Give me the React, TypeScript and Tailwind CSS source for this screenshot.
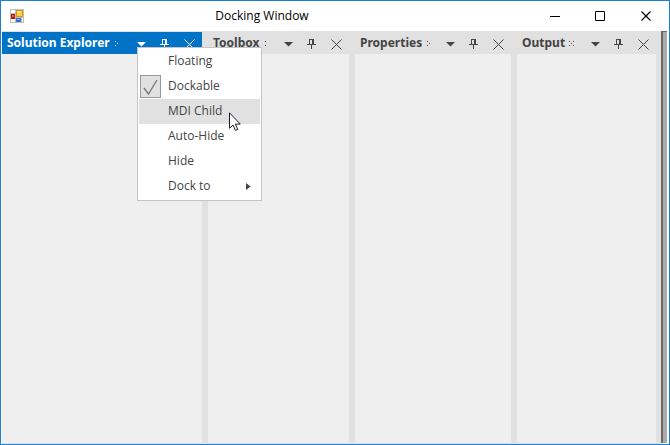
import type { ReactNode } from "react";

type Panel = {
  title: string;
  active?: boolean;
  // pixels of the dotted grip that follows the title
  grip: string;
};

const panels: Panel[] = [
  { title: "Solution Explorer", active: true, grip: "M1 0h1v1h-1zM3 2h1v1h-1zM1 4h1v1h-1z" },
  { title: "Toolbox", grip: "M2 0h1v1h-1zM2 4h1v1h-1z" },
  { title: "Properties", grip: "M1 0h1v1h-1zM3 2h1v1h-1zM1 4h1v1h-1z" },
  { title: "Output", grip: "M0 0h1v1h-1zM4 0h1v1h-1zM2 2h1v1h-1zM0 4h1v1h-1zM4 4h1v1h-1z" },
];

const menuItems = [
  { label: "Floating" },
  { label: "Dockable", checked: true },
  { label: "MDI Child", hovered: true },
  { label: "Auto-Hide" },
  { label: "Hide" },
  { label: "Dock to", submenu: true },
];

function AppIcon() {
  return (
    <svg width="14" height="14" viewBox="0 0 14 14" shapeRendering="crispEdges">
      <rect width="14" height="14" fill="#bdbdbd" />
      <path d="M1 1h4v3h-4zM1 10h4v3h-4zM12 9h1v4h-1z" fill="#fff" />
      <rect x="1" y="5" width="4" height="5" fill="#b3190b" />
      <rect x="2" y="6" width="2" height="2" fill="#e2604f" />
      <rect x="6" y="1" width="7" height="7" fill="#d69a12" />
      <rect x="7" y="2" width="5" height="5" fill="#ffcf3f" />
      <rect x="7" y="2" width="3" height="2" fill="#ffe89a" />
      <rect x="6" y="9" width="5" height="4" fill="#3a6fd0" />
      <rect x="7" y="10" width="3" height="1" fill="#7fb0ff" />
    </svg>
  );
}

function CloseIcon() {
  return (
    <svg width="11" height="11" viewBox="0 0 11 11" fill="none" stroke="currentColor">
      <path d="M.5 .5l10 10M10.5 .5l-10 10" />
    </svg>
  );
}

function PinIcon() {
  return (
    <svg width="11" height="11" viewBox="0 0 11 11" fill="currentColor" shapeRendering="crispEdges">
      <path d="M2 0h5v5h2v1h-4v4h-1v-4h-4v-1h2zM3 1v4h2v-4z" fillRule="evenodd" />
    </svg>
  );
}

function ArrowIcon() {
  return (
    <svg width="9" height="5" viewBox="0 0 9 5" fill="currentColor">
      <path d="M0 0h9l-4.500 4.500z" />
    </svg>
  );
}

function PanelButton({ label, children }: { label: string; children: ReactNode }) {
  return (
    <button aria-label={label} className="flex h-full w-6 shrink-0 items-center justify-center pt-[3px] pl-px">
      {children}
    </button>
  );
}

function DockPanel({ title, active, grip }: Panel) {
  return (
    <section className="relative flex min-w-0 flex-col bg-[#efefef]">
      <header
        className={`flex h-[22px] items-center pr-px pl-[5px] ${
          active ? "bg-[#0173c7] text-white" : "bg-[#e1e1e1] text-[#444444]"
        }`}
      >
        <h2 className="font-['Noto_Sans',sans-serif] text-[12px] leading-4 font-bold whitespace-nowrap">{title}</h2>
        <svg
          className="ml-1 shrink-0"
          width="5"
          height="6"
          viewBox="0 -1 5 6"
          fill="currentColor"
          shapeRendering="crispEdges"
        >
          <path d={grip} />
        </svg>
        <div className="ml-auto flex h-full">
          <PanelButton label="Window position">
            <ArrowIcon />
          </PanelButton>
          <PanelButton label="Auto hide">
            <PinIcon />
          </PanelButton>
          <PanelButton label="Close">
            <CloseIcon />
          </PanelButton>
        </div>
      </header>
      {active && <ContextMenu />}
    </section>
  );
}

function ContextMenu() {
  return (
    <div
      role="menu"
      className="absolute top-[15px] left-[135px] z-10 w-[125px] border border-[#c4c4c4] bg-white p-px"
    >
      {menuItems.map((item) => (
        <button
          key={item.label}
          role={item.checked ? "menuitemcheckbox" : "menuitem"}
          aria-checked={item.checked}
          className={`relative flex h-[25px] w-full items-center text-[12px] leading-4 text-[#444444] ${
            item.hovered ? "bg-[#e1e1e1]" : ""
          }`}
        >
          <span className="flex w-[29px] shrink-0">
            {item.checked && (
              <span className="ml-px flex h-[23px] w-[21px] items-center justify-center border border-[#999999] bg-[#e1e1e1]">
                <svg width="15" height="16" viewBox="0 0 15 16" fill="none" stroke="#777777" strokeWidth="1.300">
                  <path d="M1 9l4.500 6L14 1" />
                </svg>
              </span>
            )}
          </span>
          <span className="pb-0.5">{item.label}</span>
          {item.submenu && (
            <svg className="mr-[9px] ml-auto" width="5" height="7" viewBox="0 0 5 7" fill="currentColor">
              <path d="M0 0l4.500 3.500L0 7z" />
            </svg>
          )}
          {item.hovered && <Cursor />}
        </button>
      ))}
    </div>
  );
}

function Cursor() {
  return (
    <svg
      className="pointer-events-none absolute top-[13px] left-[90px] z-20"
      width="12"
      height="19"
      viewBox="0 0 12 19"
    >
      <path
        d="M.5 .8v15.500l3.500-3.300 2.400 5.400 2.300-1-2.300-5.300h4.900z"
        fill="#fff"
        stroke="#1a1a2a"
      />
    </svg>
  );
}

function TitleBar() {
  return (
    <div className="relative flex h-[30px] shrink-0 items-center justify-between bg-white pl-[9px] text-black">
      <AppIcon />
      <h1 className="absolute inset-x-0 pr-[146px] text-center text-[12px] leading-4">Docking Window</h1>
      <div className="relative flex h-full">
        <button aria-label="Minimize" className="flex w-[45px] items-center justify-center pr-px">
          <svg width="10" height="1" viewBox="0 0 10 1">
            <path d="M0 0h10v1H0z" />
          </svg>
        </button>
        <button aria-label="Maximize" className="flex w-[45px] items-center justify-center pr-px">
          <svg width="10" height="10" viewBox="0 0 10 10" fill="none" stroke="currentColor">
            <path d="M.5 .5h9v9h-9z" />
          </svg>
        </button>
        <button aria-label="Close" className="flex w-[46px] items-center justify-center">
          <svg width="10" height="10" viewBox="0 0 10 10" fill="none" stroke="currentColor" strokeWidth="1.200">
            <path d="M.5 .5l9 9M9.500 .5l-9 9" />
          </svg>
        </button>
      </div>
    </div>
  );
}

export default function App() {
  return (
    <div className="flex h-screen flex-col border border-[#1b80d2] bg-white font-['Open_Sans',sans-serif]">
      <TitleBar />
      <div className="flex min-h-0 flex-1 pl-px">
        <main className="grid min-w-0 flex-1 grid-cols-[200fr_141fr_156fr_139fr] gap-x-1.5 border-y border-[#e1e1e1] bg-[#e1e1e1] pr-[5px]">
          {panels.map((panel) => (
            <DockPanel key={panel.title} {...panel} />
          ))}
        </main>
        <div className="mb-px w-1.5 border-t border-l-2 border-[#696969] bg-[#ababab]" />
        <div className="w-0.5 bg-white" />
      </div>
    </div>
  );
}
